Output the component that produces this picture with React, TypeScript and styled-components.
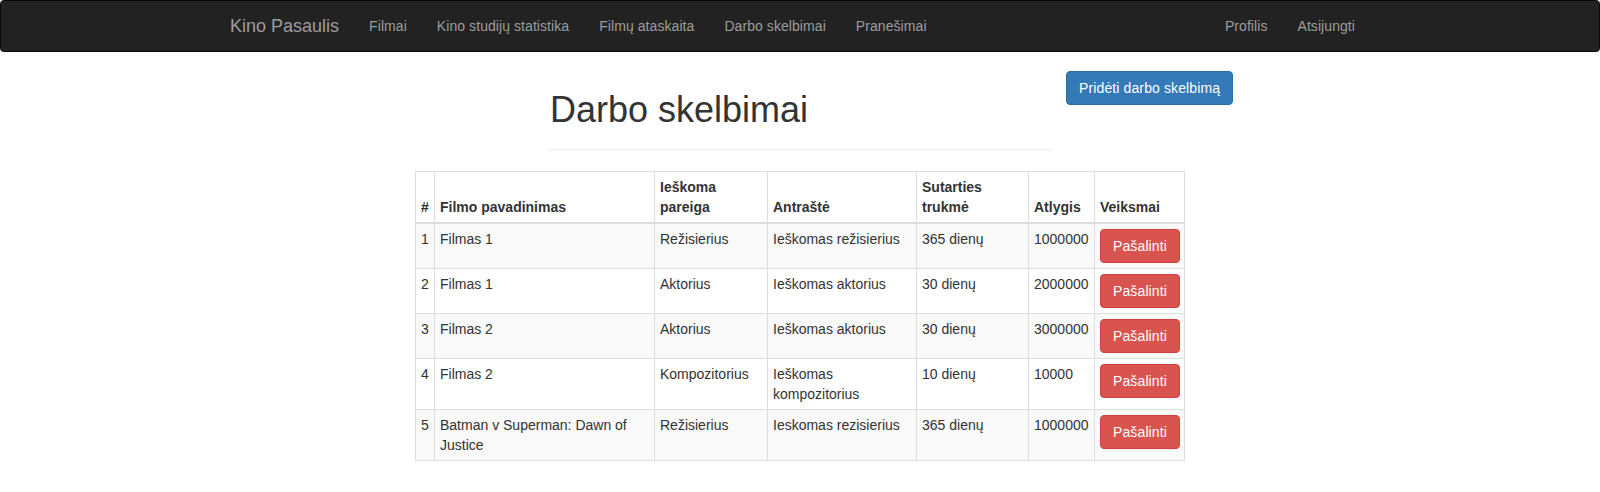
import React from "react";
import styled, { createGlobalStyle } from "styled-components";

const GlobalStyle = createGlobalStyle`
  * { box-sizing: border-box; }
  html, body { margin: 0; padding: 0; background: #fff; }
  body {
    font-family: "Liberation Sans", Arial, Helvetica, sans-serif;
    font-size: 14px;
    line-height: 1.42857143;
    color: #333;
  }
`;

const Navbar = styled.nav`
  height: 52px;
  background: #222;
  border: 1px solid #080808;
  border-radius: 4px;
  margin-bottom: 19px;
`;

const NavContainer = styled.div`
  width: 1170px;
  margin: 0 auto;
  padding: 0 15px;
  display: flex;
  align-items: stretch;
`;

const Brand = styled.a`
  display: block;
  margin-left: -15px;
  padding: 15px;
  height: 50px;
  font-size: 18px;
  line-height: 20px;
  color: #9d9d9d;
  text-decoration: none;
`;

const NavList = styled.ul<{ $right?: boolean }>`
  display: flex;
  list-style: none;
  margin: 0;
  padding: 0;
  margin-left: ${(p) => (p.$right ? "auto" : "0")};
`;

const NavLink = styled.a`
  display: block;
  padding: 15px;
  line-height: 20px;
  font-size: 14px;
  letter-spacing: 0.07px;
  color: #9d9d9d;
  text-decoration: none;
`;

const HeaderGrid = styled.div`
  display: grid;
  grid-template-columns: 1fr 504px 1fr;
  align-items: start;
`;

const PageHeader = styled.div`
  grid-column: 2;
  padding-top: 19px;
  padding-bottom: 9px;
  border-bottom: 1px solid #eee;
  margin-bottom: 21px;
`;

const Title = styled.h1`
  margin: 0 0 10px 2px;
  font-size: 36px;
  font-weight: 500;
  line-height: 1.1;
  color: #333;
`;

const Button = styled.button<{ $variant: "primary" | "danger" }>`
  display: inline-block;
  padding: 6px 12px;
  font-family: inherit;
  font-size: 14px;
  line-height: 20px;
  letter-spacing: 0.12px;
  border-radius: 4px;
  color: #fff;
  cursor: pointer;
  white-space: nowrap;
  background: ${(p) => (p.$variant === "primary" ? "#337ab7" : "#d9534f")};
  border: 1px solid ${(p) => (p.$variant === "primary" ? "#2e6da4" : "#d43f3a")};
`;

const AddButton = styled(Button)`
  grid-column: 3;
  justify-self: start;
  margin-left: 14px;
`;

const Table = styled.table`
  width: 769px;
  margin: 0 auto;
  border-collapse: collapse;
  border-spacing: 0;
  table-layout: fixed;
  border: 1px solid #ddd;
`;

const Th = styled.th`
  padding: 5px;
  text-align: left;
  vertical-align: bottom;
  font-weight: bold;
  line-height: 20px;
  border: 1px solid #ddd;
  border-bottom-width: 2px;
`;

const Tr = styled.tr`
  &:nth-child(odd) {
    background: #f9f9f9;
  }
`;

const Td = styled.td`
  padding: 5px;
  vertical-align: top;
  line-height: 20px;
  border: 1px solid #ddd;
`;

const columns = [19, 220, 113, 149, 112, 66, 90];

const rows = [
  ["1", "Filmas 1", "Režisierius", "Ieškomas režisierius", "365 dienų", "1000000"],
  ["2", "Filmas 1", "Aktorius", "Ieškomas aktorius", "30 dienų", "2000000"],
  ["3", "Filmas 2", "Aktorius", "Ieškomas aktorius", "30 dienų", "3000000"],
  ["4", "Filmas 2", "Kompozitorius", "Ieškomas kompozitorius", "10 dienų", "10000"],
  ["5", "Batman v Superman: Dawn of Justice", "Režisierius", "Ieskomas rezisierius", "365 dienų", "1000000"],
];

export default function App() {
  return (
    <>
      <GlobalStyle />
      <Navbar>
        <NavContainer>
          <Brand href="#">Kino Pasaulis</Brand>
          <NavList>
            {["Filmai", "Kino studijų statistika", "Filmų ataskaita", "Darbo skelbimai", "Pranešimai"].map((t) => (
              <li key={t}>
                <NavLink href="#">{t}</NavLink>
              </li>
            ))}
          </NavList>
          <NavList $right>
            {["Profilis", "Atsijungti"].map((t) => (
              <li key={t}>
                <NavLink href="#">{t}</NavLink>
              </li>
            ))}
          </NavList>
        </NavContainer>
      </Navbar>
      <HeaderGrid>
        <PageHeader>
          <Title>Darbo skelbimai</Title>
        </PageHeader>
        <AddButton $variant="primary">Pridėti darbo skelbimą</AddButton>
      </HeaderGrid>
      <Table>
        <colgroup>
          {columns.map((w, i) => (
            <col key={i} style={{ width: w }} />
          ))}
        </colgroup>
        <thead>
          <tr>
            <Th>#</Th>
            <Th>Filmo pavadinimas</Th>
            <Th>Ieškoma pareiga</Th>
            <Th>Antraštė</Th>
            <Th>Sutarties trukmė</Th>
            <Th>Atlygis</Th>
            <Th>Veiksmai</Th>
          </tr>
        </thead>
        <tbody>
          {rows.map((r) => (
            <Tr key={r[0]}>
              {r.map((c, i) => (
                <Td key={i}>{c}</Td>
              ))}
              <Td>
                <Button $variant="danger">Pašalinti</Button>
              </Td>
            </Tr>
          ))}
        </tbody>
      </Table>
    </>
  );
}
